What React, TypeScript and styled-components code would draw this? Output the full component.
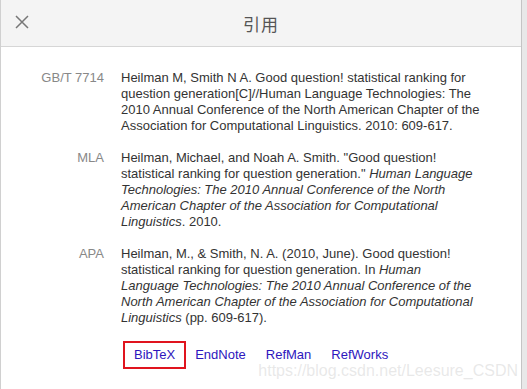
import styled, { createGlobalStyle } from 'styled-components';

const GlobalStyle = createGlobalStyle`
  html, body {
    margin: 0;
    padding: 0;
    background: #e8e8e8;
  }
  body {
    font-family: 'Liberation Sans', Arial, sans-serif;
  }
`;

interface Citation {
  label: string;
  parts: { text: string; italic?: boolean }[];
}

const citations: Citation[] = [
  {
    label: 'GB/T 7714',
    parts: [
      {
        text: 'Heilman M, Smith N A. Good question! statistical ranking for question generation[C]//Human Language Technologies: The 2010 Annual Conference of the North American Chapter of the Association for Computational Linguistics. 2010: 609-617.',
      },
    ],
  },
  {
    label: 'MLA',
    parts: [
      { text: 'Heilman, Michael, and Noah A. Smith. "Good question! statistical ranking for question generation." ' },
      {
        text: 'Human Language Technologies: The 2010 Annual Conference of the North American Chapter of the Association for Computational Linguistics',
        italic: true,
      },
      { text: '. 2010.' },
    ],
  },
  {
    label: 'APA',
    parts: [
      { text: 'Heilman, M., & Smith, N. A. (2010, June). Good question! statistical ranking for question generation. In ' },
      {
        text: 'Human Language Technologies: The 2010 Annual Conference of the North American Chapter of the Association for Computational Linguistics',
        italic: true,
      },
      { text: ' (pp. 609-617).' },
    ],
  },
];

const exportLinks = ['BibTeX', 'EndNote', 'RefMan', 'RefWorks'];

const CloseIcon = () => (
  <svg width="14" height="14" viewBox="0 0 14 14">
    <path d="M1 1 L13 13 M13 1 L1 13" stroke="#777" strokeWidth="1.5" fill="none" />
  </svg>
);

const App = () => {
  return (
    <>
      <GlobalStyle />
      <Panel>
        <Header>
          <CloseButton type="button">
            <CloseIcon />
          </CloseButton>
          <Title>引用</Title>
        </Header>
        <Body>
          {citations.map((c) => (
            <Entry key={c.label}>
              <Label>{c.label}</Label>
              <CitationText>
                {c.parts.map((p, i) =>
                  p.italic ? <em key={i}>{p.text}</em> : <span key={i}>{p.text}</span>
                )}
              </CitationText>
            </Entry>
          ))}
          <Entry>
            <span />
            <LinkRow>
              {exportLinks.map((name, i) => (
                <ExportLink key={name} $active={i === 0} href="#">
                  {name}
                </ExportLink>
              ))}
            </LinkRow>
          </Entry>
        </Body>
        <Watermark>https://blog.csdn.net/Leesure_CSDN</Watermark>
      </Panel>
    </>
  );
};

export default App;

const Panel = styled.div`
  position: relative;
  width: 522px;
  min-height: 100vh;
  box-sizing: border-box;
  background: #fff;
  border-left: 1px solid #d0d0d0;
  border-right: 1px solid #c4c4c4;
  overflow: hidden;
`;

const Header = styled.div`
  position: relative;
  height: 46px;
  display: flex;
  align-items: center;
  justify-content: center;
  background: #f4f4f4;
  border-bottom: 1px solid #d6d6d6;
`;

const CloseButton = styled.button`
  position: absolute;
  left: 14px;
  top: 15px;
  padding: 0;
  border: none;
  background: none;
  display: flex;
  cursor: pointer;
`;

const Title = styled.div`
  font-family: 'Noto Sans CJK SC', sans-serif;
  font-size: 17px;
  color: #555;
  letter-spacing: 1px;
`;

const Body = styled.div`
  padding: 23px 0 0 0;
  display: flex;
  flex-direction: column;
  gap: 16px;
`;

const Entry = styled.div`
  display: grid;
  grid-template-columns: 103px 360px;
  column-gap: 17px;
`;

const Label = styled.div`
  text-align: right;
  font-size: 13px;
  line-height: 16px;
  color: #888;
`;

const CitationText = styled.div`
  font-size: 13px;
  line-height: 16px;
  color: #333;

  em {
    font-style: italic;
  }
`;

const LinkRow = styled.div`
  display: flex;
  align-items: center;
  margin-left: 2px;
  margin-top: -1px;
`;

const ExportLink = styled.a<{ $active: boolean }>`
  display: inline-block;
  padding: 4px 9px;
  margin-right: -2px;
  font-size: 13px;
  line-height: 16px;
  color: #2d16bd;
  text-decoration: none;
  border: 2px solid ${({ $active }) => ($active ? '#e0141e' : 'transparent')};
`;

const Watermark = styled.div`
  position: absolute;
  right: 3px;
  bottom: 9px;
  font-size: 16px;
  color: rgba(190, 190, 190, 0.35);
  pointer-events: none;
  white-space: nowrap;
`;
